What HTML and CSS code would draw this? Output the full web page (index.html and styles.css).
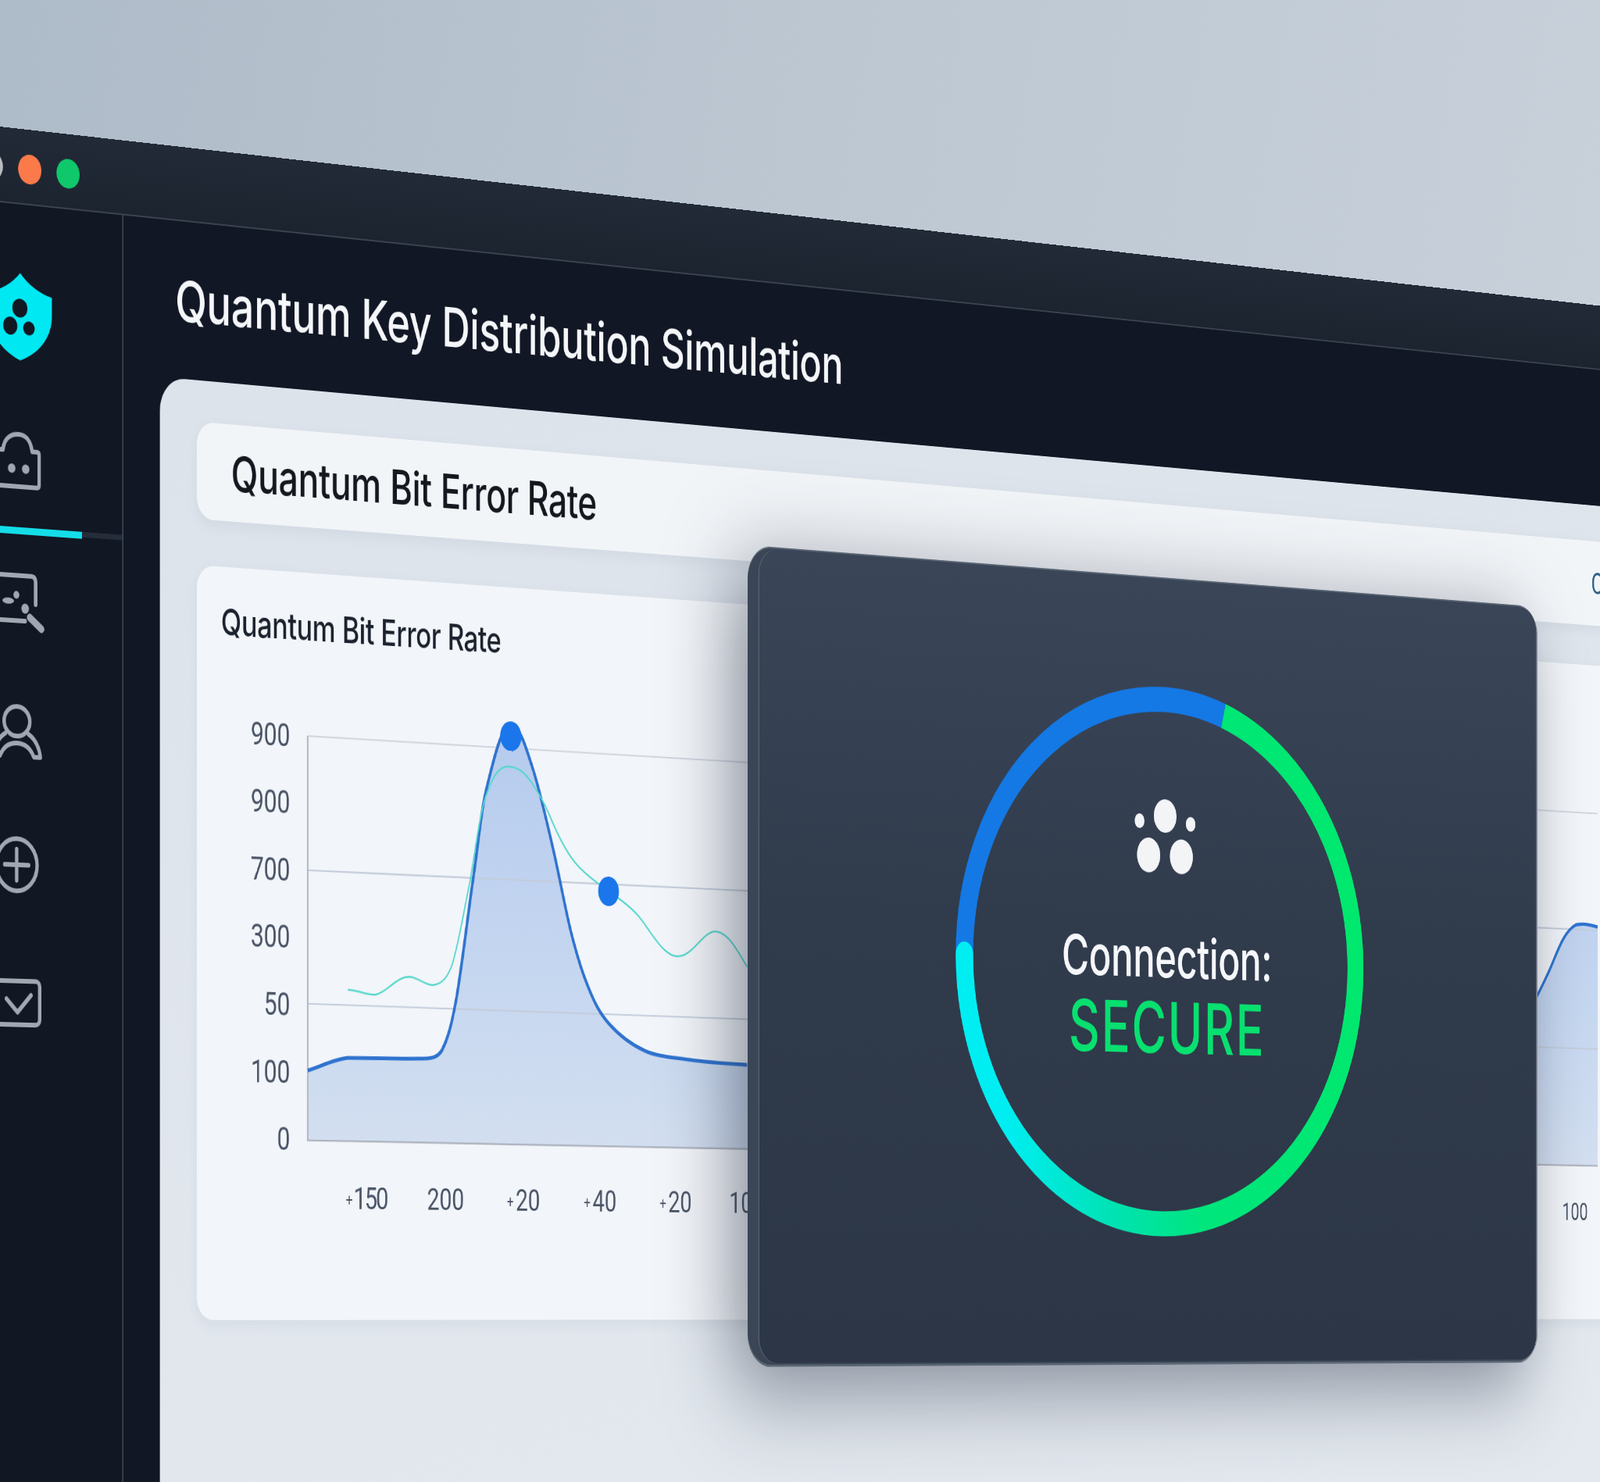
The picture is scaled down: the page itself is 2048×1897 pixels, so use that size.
FILE: index.html
```html
<!DOCTYPE html>
<html lang="en">

<head>
    <meta charset="UTF-8">
    <meta name="viewport" content="width=device-width, initial-scale=1.0">
    <title>Quantum Key Distribution Simulation</title>
    <link rel="stylesheet" href="styles.css">
</head>

<body>
    <div class="stage">
        <div class="window">
            <div class="titlebar">
                <span class="dot dot-grey"></span>
                <span class="dot dot-orange"></span>
                <span class="dot dot-green"></span>
            </div>

            <div class="window-body">
                <nav class="sidebar">
                    <svg class="icon icon-shield" viewBox="0 0 109 112">
                        <path class="shield-fill" d="M54.5 0C68 14 88 24 109 28V52C109 80 85 102 54.5 112C24 102 0 80 0 52V28C21 24 41 14 54.5 0Z" />
                        <ellipse class="shield-hole" cx="54" cy="45" rx="13" ry="12" />
                        <ellipse class="shield-hole" cx="37.5" cy="68.5" rx="12" ry="11.5" />
                        <ellipse class="shield-hole" cx="69.5" cy="70" rx="10" ry="9" />
                    </svg>
                    <svg class="icon icon-lock" viewBox="0 0 80 71">
                        <path class="icon-line" d="M2 23H16C18 8 30 2 43 2C56 2 64 10 66 23H74Q78 23 78 27V65Q78 69 74 69H6Q2 69 2 65Z" />
                        <ellipse class="icon-solid" cx="31" cy="46" rx="6.5" ry="6" />
                        <ellipse class="icon-solid" cx="55" cy="46" rx="6.5" ry="6" />
                    </svg>
                    <div class="side-progress"><div class="side-progress-fill"></div></div>
                    <svg class="icon icon-search" viewBox="0 0 92 73">
                        <path class="icon-line" d="M60 60H10Q2 60 2 52V10Q2 2 10 2H70Q78 2 78 10V38" />
                        <ellipse class="icon-solid" cx="31" cy="35" rx="10" ry="4" />
                        <circle class="icon-solid" cx="45" cy="27" r="5" />
                        <circle class="icon-solid" cx="60" cy="44" r="6.5" />
                        <path class="icon-handle" d="M68 55L88 69" />
                    </svg>
                    <svg class="icon icon-person" viewBox="0 0 85 69">
                        <ellipse class="icon-line" cx="43" cy="22" rx="22" ry="19" />
                        <path class="icon-line" d="M63 38C75 44 82 56 83 67H72C66 55 55 50 43 50C31 50 20 55 14 67H3C4 56 11 44 23 38" />
                    </svg>
                    <svg class="icon icon-plus" viewBox="0 0 75 72">
                        <ellipse class="icon-line" cx="37.5" cy="36" rx="35" ry="33.5" />
                        <path class="icon-line" d="M17 36H58M37.5 16V56" />
                    </svg>
                    <svg class="icon icon-check" viewBox="0 0 83 60">
                        <rect class="icon-line" x="2" y="2" width="79" height="56" rx="7" />
                        <path class="icon-line" d="M24 25L43 42L66 20" />
                    </svg>
                </nav>

                <main class="main">
                    <h1 class="page-title">Quantum Key Distribution Simulation</h1>

                    <section class="panel">
                        <div class="header-card">
                            <h2 class="header-title">Quantum Bit Error Rate</h2>
                            <span class="header-status">Connected</span>
                        </div>

                        <div class="chart-card">
                            <h3 class="chart-title">Quantum Bit Error Rate</h3>
                            <div class="chart-body">
                                <div class="y-axis">
                                    <span>900</span>
                                    <span>900</span>
                                    <span>700</span>
                                    <span>300</span>
                                    <span>50</span>
                                    <span>100</span>
                                    <span>0</span>
                                </div>
                                <!-- viewBox is in window coordinates, easier to read off the curve -->
                                <svg class="plot" viewBox="520 876 2720 620">
                                    <defs>
                                        <linearGradient id="area-fill" gradientUnits="userSpaceOnUse" x1="0" y1="900" x2="0" y2="1460">
                                            <stop offset="0" stop-color="#b6cbee" />
                                            <stop offset="0.6" stop-color="#c6d7f0" />
                                            <stop offset="1" stop-color="#d3dff0" />
                                        </linearGradient>
                                    </defs>
                                    <path class="grid-line" d="M541 920L3211 928M541 1097L3211 1104" />
                                    <path class="area" d="M541 1361C565 1355 590 1345 614 1343C650 1342 732 1343 761 1341C772 1340 780 1338 787 1330C796 1317 803 1303 813 1264C823 1225 836 1144 846 1095C856 1046 860 1006 872 972C884 938 898 891 916 891C934 891 944 918 957 946C970 974 985 1020 997 1057C1009 1094 1019 1134 1030 1165C1041 1196 1051 1219 1063 1239C1075 1260 1085 1274 1103 1288C1121 1302 1145 1315 1171 1323C1197 1331 1225 1331 1259 1334C1293 1337 1335 1338 1372 1339L2800 1340L3040 1235C3060 1220 3080 1192 3097 1168C3115 1142 3130 1108 3160 1097C3175 1094 3195 1096 3211 1099L3211 1459L541 1453Z" />
                                    <path class="grid-line-soft" d="M541 1097L3211 1104M541 1273L3211 1283" />
                                    <path class="axis-line" d="M541 920V1453L3211 1459" />
                                    <path class="curve-main" d="M541 1361C565 1355 590 1345 614 1343C650 1342 732 1343 761 1341C772 1340 780 1338 787 1330C796 1317 803 1303 813 1264C823 1225 836 1144 846 1095C856 1046 860 1006 872 972C884 938 898 891 916 891C934 891 944 918 957 946C970 974 985 1020 997 1057C1009 1094 1019 1134 1030 1165C1041 1196 1051 1219 1063 1239C1075 1260 1085 1274 1103 1288C1121 1302 1145 1315 1171 1323C1197 1331 1225 1331 1259 1334C1293 1337 1335 1338 1372 1339" />
                                    <path class="curve-main" d="M3040 1235C3060 1220 3080 1192 3097 1168C3115 1142 3130 1108 3160 1097C3175 1094 3195 1096 3211 1099" />
                                    <path class="curve-teal" d="M614 1253C630 1252 648 1260 665 1258C685 1255 702 1234 726 1233C742 1233 756 1244 771 1243C788 1241 798 1232 807 1213C820 1180 830 1135 839 1104C850 1060 858 1005 872 982C882 960 895 946 911 946C930 946 940 952 951 962C965 975 978 990 990 1010C1008 1040 1025 1062 1043 1075C1060 1088 1082 1098 1102 1108C1120 1116 1140 1125 1157 1138C1180 1155 1205 1193 1235 1193C1265 1193 1285 1157 1310 1157C1335 1157 1355 1185 1372 1204" />
                                    <circle class="plot-dot" cx="916" cy="905" r="20" />
                                    <circle class="plot-dot" cx="1102" cy="1108" r="20" />
                                </svg>
                            </div>
                            <div class="x-axis">
                                <span class="tick tick-first"><small>+</small>150</span>
                                <span class="tick">200</span>
                                <span class="tick"><small>+</small>20</span>
                                <span class="tick"><small>+</small>40</span>
                                <span class="tick"><small>+</small>20</span>
                                <span class="tick tick-covered">100</span>
                                <span class="tick tick-far">100</span>
                            </div>
                        </div>
                    </section>
                </main>
            </div>

            <div class="modal">
                <div class="modal-face">
                    <div class="ring">
                        <svg class="ring-svg" viewBox="0 0 878 791">
                            <defs>
                                <linearGradient id="ring-fill" gradientUnits="userSpaceOnUse" x1="860" y1="400" x2="18" y2="520">
                                    <stop offset="0" stop-color="#00e86e" />
                                    <stop offset="0.45" stop-color="#00e67c" />
                                    <stop offset="0.68" stop-color="#00e2b4" />
                                    <stop offset="0.92" stop-color="#00eef2" />
                                </linearGradient>
                            </defs>
                            <path class="ring-blue" d="M18 400A421 377 0 0 1 567.8 36.6" />
                            <path class="ring-green" d="M567.8 36.6A421 377 0 1 1 18 395.5" />
                            <circle class="ring-cap" cx="18" cy="395.5" r="18" />
                        </svg>
                        <svg class="ring-icon" viewBox="0 0 131 107">
                            <ellipse cx="65.5" cy="24" rx="24.5" ry="24" />
                            <ellipse cx="10.5" cy="32.5" rx="10.5" ry="10.5" />
                            <ellipse cx="120.5" cy="34" rx="10.5" ry="10.5" />
                            <ellipse cx="30" cy="81" rx="25" ry="25" />
                            <ellipse cx="100.5" cy="81.5" rx="25" ry="25" />
                        </svg>
                        <div class="connection-label">Connection:</div>
                        <div class="connection-state">SECURE</div>
                    </div>
                </div>
            </div>
        </div>
    </div>
</body>

</html>
```

FILE: styles.css
```css
html,
body {
    margin: 0;
    padding: 0;
}

body {
    position: relative;
    width: 2048px;
    height: 1897px;
    overflow: hidden;
    font-family: Roboto, "Open Sans", sans-serif;
    background: linear-gradient(100deg, #aebbc8 0%, #bcc7d2 45%, #cbd3dc 100%);
}

/* the whole app is one tilted plane, everything below is laid out flat inside it */
.stage {
    position: absolute;
    top: 0;
    left: 0;
    width: 0;
    height: 0;
    transform-origin: 0 0;
    transform: matrix3d(0.75, 0.093, 0, 0.00005535, 0, 1, 0, 0, 0, 0, 1, 0, 0, 0, 0, 1);
}

.window {
    position: absolute;
    left: -60px;
    top: 162px;
    width: 3400px;
    height: 1800px;
    display: flex;
    flex-direction: column;
    background: #121725;
}

.titlebar {
    box-sizing: border-box;
    height: 97px;
    padding: 6px 0 0 25px;
    display: flex;
    align-items: center;
    gap: 26px;
    background: linear-gradient(180deg, #222a37, #1c2430);
    border-bottom: 2px solid #3b4350;
}

.dot {
    width: 40px;
    height: 38px;
    border-radius: 50%;
}

.dot-grey {
    background: #b9bcc0;
}

.dot-orange {
    background: #fb7a4a;
}

.dot-green {
    background: #10c86c;
}

.window-body {
    flex: 1;
    display: flex;
    min-height: 0;
}

.sidebar {
    box-sizing: border-box;
    width: 273px;
    flex: none;
    padding: 88px 94px 0 0;
    display: flex;
    flex-direction: column;
    align-items: center;
    background: #111723;
    border-right: 2px solid #3c4554;
}

.icon {
    display: block;
    flex: none;
    overflow: visible;
}

.icon-shield {
    width: 109px;
    height: 112px;
    margin-left: 12px;
}

.shield-fill {
    fill: #00e8f2;
}

.shield-hole {
    fill: #111723;
}

.icon-lock {
    width: 80px;
    height: 71px;
    margin-top: 93px;
}

.icon-line {
    fill: none;
    stroke: #a0a7b1;
    stroke-width: 6;
    stroke-linecap: round;
    stroke-linejoin: round;
}

.icon-solid {
    fill: #a0a7b1;
}

.icon-handle {
    fill: none;
    stroke: #a0a7b1;
    stroke-width: 10;
    stroke-linecap: round;
}

.side-progress {
    align-self: stretch;
    height: 7px;
    margin: 50px -94px 0 0;
    background: #252d3a;
}

.side-progress-fill {
    width: 201px;
    height: 9px;
    background: #14dde8;
}

.icon-search {
    width: 92px;
    height: 73px;
    margin-top: 53px;
}

.icon-person {
    width: 85px;
    height: 69px;
    margin-top: 94px;
}

.icon-plus {
    width: 75px;
    height: 72px;
    margin-top: 101px;
}

.icon-check {
    width: 83px;
    height: 60px;
    margin-top: 111px;
}

.main {
    flex: 1;
    min-width: 0;
    padding: 59px 0 0 64px;
    display: flex;
    flex-direction: column;
}

.page-title {
    margin: 0 0 56px 27px;
    font-family: Inter, Roboto, sans-serif;
    font-size: 73px;
    line-height: 90px;
    font-weight: 500;
    letter-spacing: -0.5px;
    color: #f4f6f9;
    white-space: nowrap;
}

.panel {
    flex: 1;
    padding: 54px 40px 0 65px;
    display: flex;
    flex-direction: column;
    gap: 60px;
    border-radius: 44px 0 0 0;
    background: linear-gradient(170deg, #dde3eb, #e4e9ef);
}

.header-card {
    box-sizing: border-box;
    height: 127px;
    padding-left: 61px;
    display: flex;
    align-items: center;
    justify-content: space-between;
    border-radius: 30px;
    background: #f2f5f8;
    box-shadow: 0 6px 18px rgba(70, 85, 110, 0.08);
}

.header-title {
    margin: 0;
    font-family: Inter, Roboto, sans-serif;
    font-size: 63px;
    font-weight: 500;
    letter-spacing: -0.5px;
    color: #14181f;
    white-space: nowrap;
}

.header-status {
    width: 104px;
    font-size: 44px;
    color: #2a6186;
    white-space: nowrap;
}

.chart-card {
    box-sizing: border-box;
    height: 985px;
    padding: 42px 0 0 30px;
    border-radius: 30px;
    background: #f2f5f9;
    box-shadow: 0 6px 18px rgba(70, 85, 110, 0.08);
}

.chart-title {
    margin: 0 0 69px 13px;
    font-family: Inter, Roboto, sans-serif;
    font-size: 48px;
    line-height: 60px;
    font-weight: 500;
    letter-spacing: -0.5px;
    color: #1b222d;
    white-space: nowrap;
}

.chart-body {
    display: flex;
    gap: 11px;
}

.y-axis {
    width: 137px;
    height: 620px;
    display: grid;
    grid-template-rows: repeat(7, 1fr);
    align-items: center;
    justify-items: end;
    font-size: 42px;
    color: #4b5567;
}

.plot {
    display: block;
    width: 2720px;
    height: 620px;
    overflow: visible;
}

.grid-line {
    fill: none;
    stroke: #cfd4dd;
    stroke-width: 2;
}

.grid-line-soft {
    fill: none;
    stroke: #c3ccda;
    stroke-width: 2;
}

.area {
    fill: url(#area-fill);
}

.axis-line {
    fill: none;
    stroke: #aeb4bf;
    stroke-width: 2.5;
}

.curve-main {
    fill: none;
    stroke: #2f73cf;
    stroke-width: 5;
}

.curve-teal {
    fill: none;
    stroke: #58d8cc;
    stroke-width: 2.5;
}

.plot-dot {
    fill: #1a76ea;
}

.x-axis {
    margin-top: 8px;
    padding-left: 203px;
    display: flex;
    font-size: 41px;
    line-height: 50px;
    color: #4b5567;
}

.tick {
    width: 146px;
    flex: none;
    text-align: center;
}

.tick small {
    font-size: 22px;
    vertical-align: 4px;
    margin-right: 4px;
}

.tick-first {
    letter-spacing: -2.5px;
}

.tick-covered {
    margin-left: -7px;
}

.tick-far {
    margin-left: 1641px;
    font-size: 36px;
}

/* floats over the app */
.modal {
    position: absolute;
    left: 1433px;
    top: 461px;
    box-sizing: border-box;
    width: 1697px;
    height: 1132px;
    padding: 3px 3px 5px 23px;
    border-radius: 46px;
    background: #3a4555;
    box-shadow: inset -3px 0 0 #868e9b, inset 0 2px 0 #5a6575, inset 0 -3px 0 #5a6575, -30px 30px 130px rgba(30, 40, 60, 0.5);
}

.modal-face {
    box-sizing: border-box;
    height: 100%;
    padding-bottom: 26px;
    display: flex;
    align-items: center;
    justify-content: center;
    border-radius: 36px;
    background: linear-gradient(180deg, #3a4658 0%, #303b4c 45%, #2c3646 100%);
    box-shadow: -2px 0 0 #55606f;
}

.ring {
    position: relative;
    box-sizing: border-box;
    width: 878px;
    height: 791px;
    padding: 162px 0 0 18px;
    display: flex;
    flex-direction: column;
    align-items: center;
}

.ring-svg {
    position: absolute;
    top: 0;
    left: 0;
    width: 878px;
    height: 791px;
    overflow: visible;
}

.ring-blue {
    fill: none;
    stroke: #1479e5;
    stroke-width: 36;
}

.ring-green {
    fill: none;
    stroke: url(#ring-fill);
    stroke-width: 36;
}

.ring-cap {
    fill: #00eef2;
}

.ring-icon {
    width: 131px;
    height: 107px;
    flex: none;
    margin: 0 13px 0 0;
    fill: #f3f4f6;
}

.connection-label {
    margin-top: 74px;
    font-family: Inter, Roboto, sans-serif;
    font-size: 79px;
    line-height: 92px;
    font-weight: 500;
    letter-spacing: -0.5px;
    color: #f5f7fa;
}

.connection-state {
    font-family: Inter, Roboto, sans-serif;
    font-size: 102px;
    line-height: 110px;
    font-weight: 500;
    letter-spacing: 3px;
    color: #08e070;
}
```
